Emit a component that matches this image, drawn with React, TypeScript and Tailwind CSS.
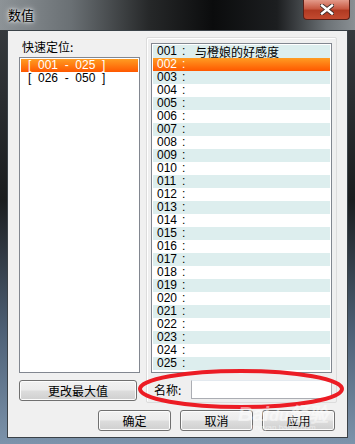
import React from "react";

const rows = Array.from({ length: 25 }, (_, i) => String(i + 1).padStart(3, "0"));

function WinButton({ label, className = "" }: { label: string; className?: string }) {
  return (
    <button
      className={`flex h-[21px] items-center justify-center rounded-[3px] border border-[#707070] bg-[linear-gradient(to_bottom,#f2f2f2_0%,#ebebeb_48%,#dddddd_52%,#cfcfcf_100%)] text-[12px] text-black shadow-[inset_0_0_0_1px_#fcfcfc] ${className}`}
    >
      {label}
    </button>
  );
}

export default function App() {
  return (
    <div
      className="relative flex h-[444px] w-[355px] flex-col overflow-hidden bg-[linear-gradient(to_bottom,#3a3e42_0%,#1b1d1f_45%,#4e6177_75%,#7c93ab_100%)]"
      style={{ fontFamily: '"Noto Sans CJK SC", "Liberation Sans", sans-serif' }}
    >
      {/* Title bar */}
      <div className="flex h-[30px] shrink-0 items-start bg-[linear-gradient(to_right,#8d9397_0%,#6a7074_20%,#262829_42%,#0b0c0d_60%,#1c1e20_78%,#6c7276_92%,#8a9094_100%)]">
        <span className="pl-[8px] pt-[7px] text-[13px] leading-[15px] text-black [text-shadow:0_0_6px_#ffffff,0_0_3px_#ffffff]">
          数值
        </span>
        <div className="flex-1" />
        <div className="mr-[5px] flex h-[20px] w-[47px] items-center justify-center rounded-b-[4px] border border-t-0 border-[#5a2018] bg-[linear-gradient(to_bottom,#e39a8a_0%,#c85a44_45%,#b13a22_55%,#c24a30_100%)]">
          <svg width="14" height="11" viewBox="0 0 14 11">
            <path d="M2 1.5 L12 9.5 M12 1.5 L2 9.5" stroke="#3b2a28" strokeWidth="4.2" strokeLinecap="square" />
            <path d="M2 1.5 L12 9.5 M12 1.5 L2 9.5" stroke="#ffffff" strokeWidth="2.4" strokeLinecap="square" />
          </svg>
        </div>
      </div>

      {/* Client area */}
      <div className="ml-[7px] mr-[7px] flex h-[408px] flex-col border border-[#3b4248] bg-[#f0f0f0]">
        <div className="flex flex-1">
          {/* Left column */}
          <div className="ml-[11px] flex w-[121px] flex-col">
            <div className="mt-[8px] h-[18px] pl-[3px] text-[12px] leading-[16px] text-black">快速定位:</div>
            <div className="h-[316px] border border-[#828790] bg-white p-[1px]">
              <div className="h-[13px] bg-[linear-gradient(to_bottom,#ff9c22,#ff5800)] pl-[7px] text-[12px] leading-[13px] text-white" style={{ fontFamily: '"Liberation Sans", sans-serif' }}>
                [&nbsp;&nbsp;001&nbsp;&nbsp;-&nbsp;&nbsp;025&nbsp;&nbsp;]
              </div>
              <div className="h-[13px] pl-[7px] text-[12px] leading-[13px] text-black" style={{ fontFamily: '"Liberation Sans", sans-serif' }}>
                [&nbsp;&nbsp;026&nbsp;&nbsp;-&nbsp;&nbsp;050&nbsp;&nbsp;]
              </div>
            </div>
            <WinButton label="更改最大值" className="mt-[7px] w-[118px]" />
          </div>

          {/* Right group */}
          <div className="ml-[6px] mt-[6px] flex h-[366px] w-[191px] flex-col rounded-[2px] border border-[#dcdcdc] bg-[#efefef] px-[4px] pt-[5px] shadow-[inset_1px_1px_0_#ffffff]">
            <div className="h-[330px] border border-[#828790] bg-white p-[1px]" style={{ fontFamily: '"Liberation Sans", sans-serif' }}>
              {rows.map((n, i) => {
                const sel = i === 1;
                const bg = sel
                  ? "bg-[linear-gradient(to_bottom,#ff9c22,#ff5800)] text-white"
                  : i % 2 === 0
                    ? "bg-[#ddeeee] text-black"
                    : "bg-white text-black";
                return (
                  <div key={n} className={`flex h-[13px] items-center pl-[4px] text-[12px] leading-[13px] ${bg}`}>
                    <span className="w-[25px]">{n}</span>
                    <span className="w-[13px]">:</span>
                    {i === 0 && (
                      <span className="text-[12px]" style={{ fontFamily: '"Noto Sans CJK SC", sans-serif' }}>
                        与橙娘的好感度
                      </span>
                    )}
                  </div>
                );
              })}
            </div>
            <div className="mt-[7px] flex items-center">
              <span className="w-[40px] pl-[3px] text-[12px] leading-[16px] text-black">名称:</span>
              <div className="h-[19px] flex-1 border border-[#abadb3] border-t-[#e3e9ef] bg-white" />
            </div>
          </div>
        </div>

        {/* Bottom buttons */}
        <div className="mb-[6px] flex justify-end gap-[9px] pr-[12px]">
          <WinButton label="确定" className="w-[73px]" />
          <WinButton label="取消" className="w-[73px]" />
          <WinButton label="应用" className="w-[73px]" />
        </div>
      </div>

      {/* Red annotation ellipse */}
      <svg className="pointer-events-none absolute left-0 top-0" width="355" height="444">
        <ellipse cx="241" cy="389" rx="101" ry="18" fill="none" stroke="#ec1c24" strokeWidth="4" />
      </svg>

      {/* Watermark */}
      <div className="pointer-events-none absolute left-[238px] top-[404px] flex flex-col items-center leading-none text-white opacity-50">
        <span className="text-[20px] font-bold italic" style={{ fontFamily: '"Liberation Sans", sans-serif' }}>
          Bai<span className="text-[16px]">du</span>经验
        </span>
        <span className="text-[8px]" style={{ fontFamily: '"Liberation Sans", sans-serif' }}>jingyan.baidu.com</span>
      </div>
    </div>
  );
}
